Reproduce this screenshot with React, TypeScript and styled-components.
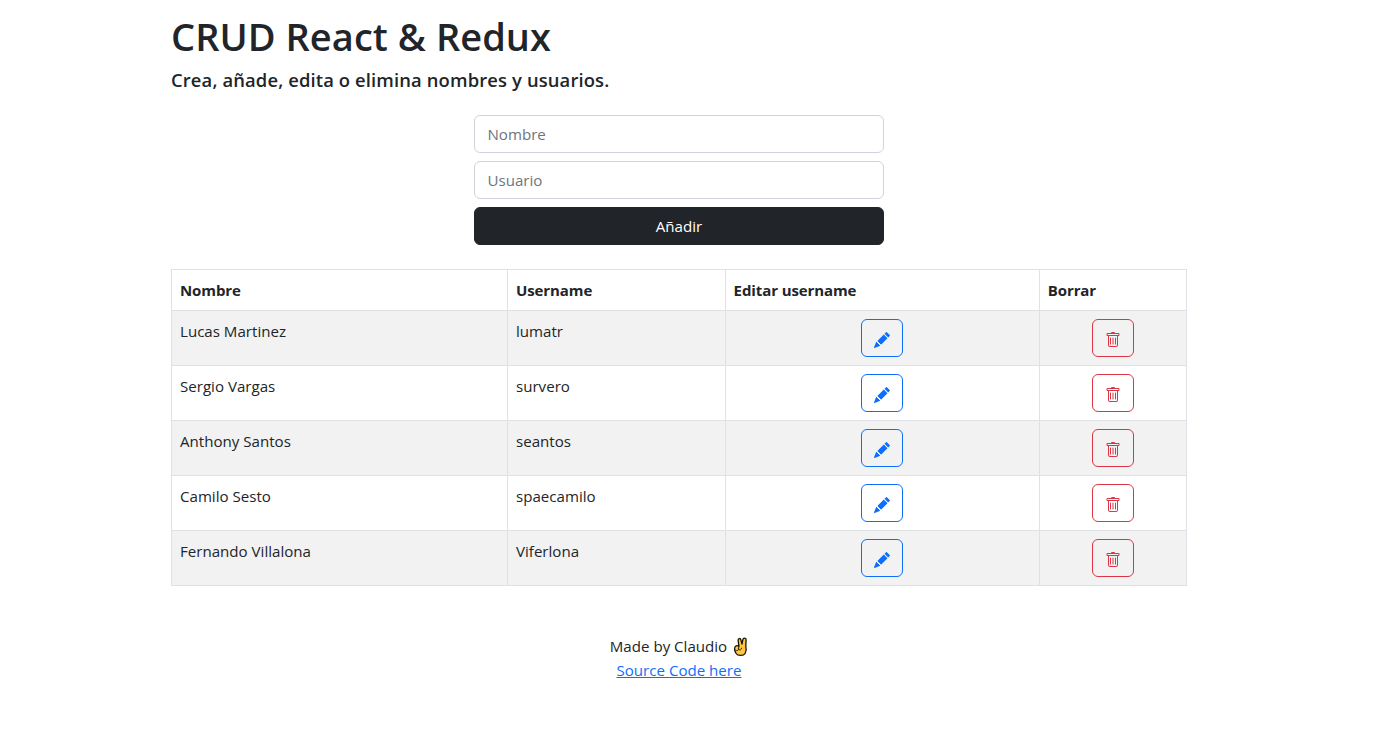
import React from 'react';
import styled, { createGlobalStyle } from 'styled-components';
import { BsPencilFill, BsTrash } from 'react-icons/bs';

const GlobalStyle = createGlobalStyle`
  *, *::before, *::after { box-sizing: border-box; }
  body {
    margin: 0;
    background: #fff;
    color: #212529;
    font: 400 15.1px/24px "Segoe UI", "Open Sans", "Noto Sans", sans-serif;
  }
`;

const Page = styled.main`
  width: 1016px;
  margin: 0 0 0 171px;
  padding-top: 12px;
`;

const Title = styled.h1`
  margin: 0 0 8px;
  font-size: 38px;
  font-weight: 600;
  line-height: 48px;
  letter-spacing: 0.05px;
`;

const Subtitle = styled.h5`
  margin: 0;
  font-size: 18.4px;
  font-weight: 600;
  line-height: 23px;
  letter-spacing: 0.13px;
`;

const Form = styled.form`
  display: grid;
  gap: 8px;
  width: 410px;
  margin: 24px auto 24px;
`;

const Field = styled.input`
  width: 100%;
  height: 38px;
  padding: 6px 12.5px;
  border: 1px solid #ced4da;
  border-radius: 6px;
  background: #fff;
  color: inherit;
  font: inherit;
  &::placeholder { color: #6c757d; opacity: 1; }
`;

const SubmitButton = styled.button`
  height: 38px;
  padding: 6px 12px;
  border: 1px solid #212529;
  border-radius: 6px;
  background: #212529;
  color: #fff;
  font: inherit;
`;

const Table = styled.table`
  width: 1016px;
  table-layout: fixed;
  border-collapse: collapse;
`;

const Column = styled.col<{ $width: number }>`
  width: ${({ $width }) => $width}px;
`;

const HeadCell = styled.th`
  height: 41px;
  padding: 8px;
  border: 1px solid #dee2e6;
  text-align: left;
  font-size: 15px;
  font-weight: 700;
  letter-spacing: -0.1px;
`;

const Row = styled.tr`
  height: 55px;
  &:nth-child(odd) { background: #f2f2f2; }
`;

const Cell = styled.td<{ $center?: boolean }>`
  padding: 8px;
  border: 1px solid #dee2e6;
  vertical-align: top;
  text-align: ${({ $center }) => ($center ? 'center' : 'left')};
`;

const IconButton = styled.button<{ $color: string }>`
  display: inline-flex;
  align-items: center;
  justify-content: center;
  width: 42px;
  height: 38px;
  padding: 4px 0 0;
  border: 1px solid ${({ $color }) => $color};
  border-radius: 6px;
  background: transparent;
  color: ${({ $color }) => $color};
  vertical-align: top;
`;

const Footer = styled.footer`
  margin-top: 48px;
  text-align: center;
`;

const Credit = styled.p`
  display: flex;
  justify-content: center;
  gap: 5px;
  margin: 0;
`;

const SourceLink = styled.a`
  color: #0d6efd;
  text-decoration: underline;
`;

const Hand = styled.svg`
  width: 16px;
  height: 20px;
  margin-top: 3px;
`;

const users = [
  ['Lucas Martinez', 'lumatr'],
  ['Sergio Vargas', 'survero'],
  ['Anthony Santos', 'seantos'],
  ['Camilo Sesto', 'spaecamilo'],
  ['Fernando Villalona', 'Viferlona'],
];

export default function App() {
  return (
    <>
      <GlobalStyle />
      <Page>
        <Title>CRUD React &amp; Redux</Title>
        <Subtitle>Crea, añade, edita o elimina nombres y usuarios.</Subtitle>
        <Form onSubmit={(event) => event.preventDefault()}>
          <Field placeholder="Nombre" />
          <Field placeholder="Usuario" />
          <SubmitButton>Añadir</SubmitButton>
        </Form>
        <Table>
          <colgroup>
            <Column $width={336} />
            <Column $width={217.6} />
            <Column $width={314.2} />
            <Column $width={147.4} />
          </colgroup>
          <thead>
            <tr>
              <HeadCell>Nombre</HeadCell>
              <HeadCell>Username</HeadCell>
              <HeadCell>Editar username</HeadCell>
              <HeadCell>Borrar</HeadCell>
            </tr>
          </thead>
          <tbody>
            {users.map(([name, username]) => (
              <Row key={username}>
                <Cell>{name}</Cell>
                <Cell>{username}</Cell>
                <Cell $center>
                  <IconButton $color="#0d6efd" aria-label="Editar"><BsPencilFill size={16} /></IconButton>
                </Cell>
                <Cell $center>
                  <IconButton $color="#dc3545" aria-label="Borrar"><BsTrash size={16} /></IconButton>
                </Cell>
              </Row>
            ))}
          </tbody>
        </Table>
        <Footer>
          <Credit>
            Made by Claudio
            <Hand viewBox="0 0 16 20" aria-hidden="true">
              <g stroke="#17130b" strokeWidth="1.3" strokeLinejoin="round" strokeLinecap="round" fill="#ffc83d">
                <path d="M6.9 9.2 6.1 3.2C5.9 1.2 8.4.9 8.9 2.8L10 7.2 10.9 2.4C11.3.4 14.3.7 14.1 2.8L13.8 9.4C14.5 11.6 14.3 14.4 13.1 16.5 11.6 19.1 5.7 19 4.1 16.5 2.9 14.6 2.3 11.4 3.1 9.8 3.9 8.4 5.9 8.3 6.9 9.2Z" />
                <path d="M3.5 13.2C4.7 14.2 6.3 13.6 6.5 12.2L6.8 9.6M6.5 12.4C7.9 13.6 9.6 12.8 9.5 11.2" fill="none" strokeWidth="0.9" />
              </g>
            </Hand>
          </Credit>
          <SourceLink href="#">Source Code here</SourceLink>
        </Footer>
      </Page>
    </>
  );
}
